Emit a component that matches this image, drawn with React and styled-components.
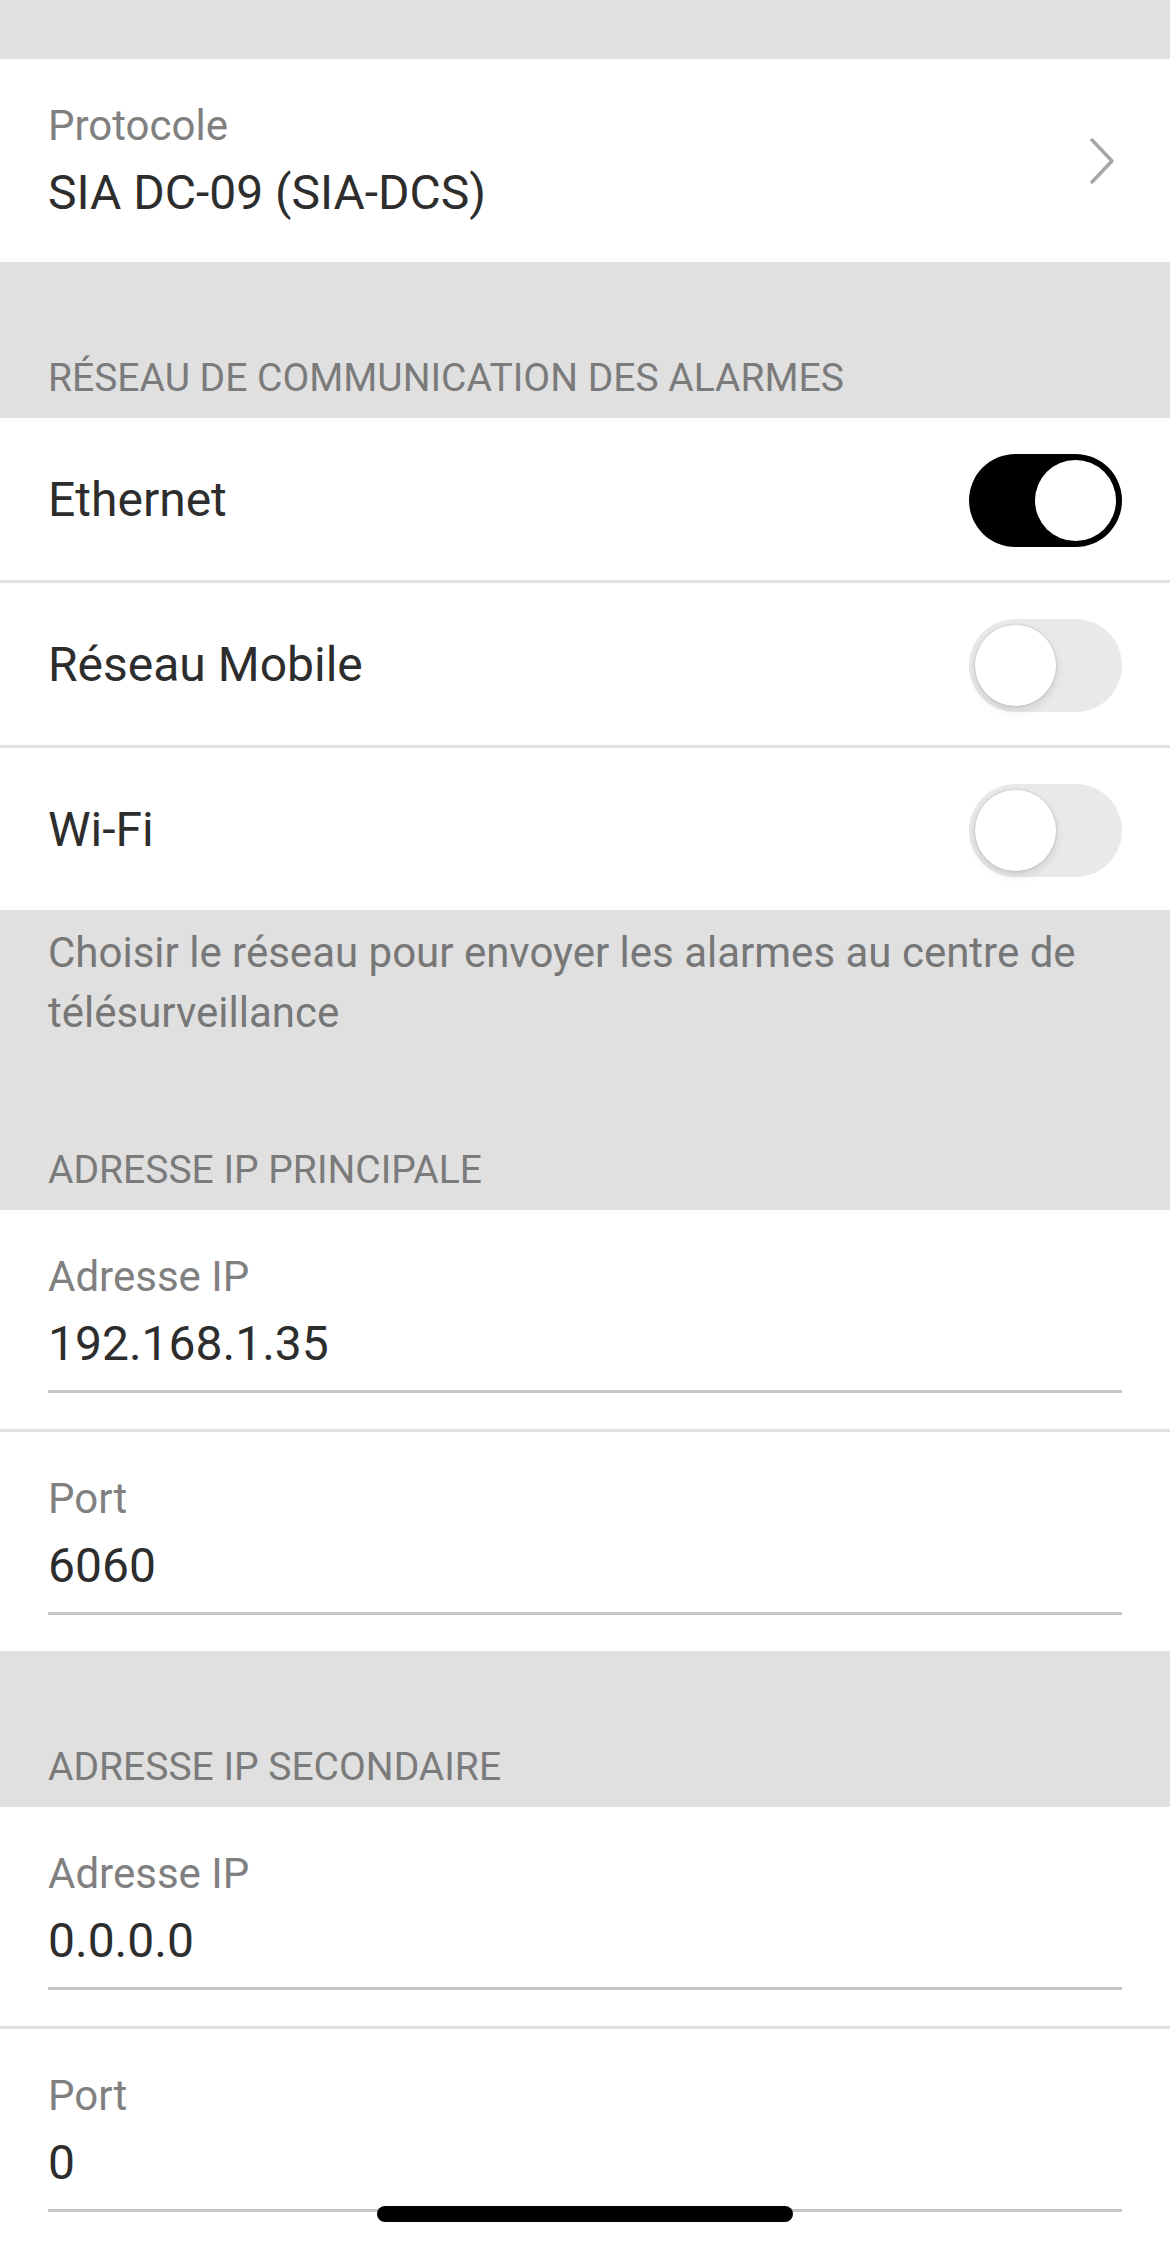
import React from "react";
import styled, { createGlobalStyle } from "styled-components";

const GlobalStyle = createGlobalStyle`
  html, body {
    margin: 0;
    padding: 0;
    background: #e0e0e0;
    overflow: hidden;
  }
  * { box-sizing: border-box; }
  body {
    font-family: Roboto, "Noto Sans", "Liberation Sans", sans-serif;
    -webkit-font-smoothing: antialiased;
  }
`;

const Screen = styled.div`
  position: relative;
  width: 1170px;
  height: 2246px;
  overflow: hidden;
  background: #e0e0e0;
  display: flex;
  flex-direction: column;
`;

const TopGap = styled.div`
  height: 59px;
  flex-shrink: 0;
`;

const Group = styled.div`
  background: #ffffff;
  display: flex;
  flex-direction: column;
  flex-shrink: 0;
`;

const SelectRow = styled.div`
  display: flex;
  align-items: center;
  justify-content: space-between;
  padding: 42px 54px 41px 48px;
`;

const FieldText = styled.div`
  display: flex;
  flex-direction: column;
  gap: 14px;
`;

const Label = styled.div`
  font-size: 42px;
  line-height: 50px;
  color: #808080;
`;

const Value = styled.div`
  font-size: 48px;
  line-height: 56px;
  color: #2d2d2d;
`;

const SectionHeader = styled.div`
  padding: 93px 48px 17px 48px;
  font-size: 39px;
  line-height: 46px;
  color: #7b7b7b;
  text-transform: uppercase;
  flex-shrink: 0;
`;

const SwitchRow = styled.div`
  height: 162px;
  display: flex;
  align-items: center;
  justify-content: space-between;
  padding: 2px 48px 0 48px;
  & + & {
    border-top: 3px solid #e0e0e0;
    height: 165px;
  }
`;

const SwitchLabel = styled.span`
  font-size: 48px;
  line-height: 56px;
  color: #2d2d2d;
`;

const Track = styled.button`
  position: relative;
  width: 153px;
  height: 93px;
  border: none;
  padding: 0;
  border-radius: 47px;
  background: ${(p) => (p.$on ? "#000000" : "#e9e9ea")};
  cursor: pointer;
  flex-shrink: 0;
`;

const Knob = styled.span`
  position: absolute;
  top: 6px;
  left: ${(p) => (p.$on ? "66px" : "6px")};
  width: 81px;
  height: 81px;
  border-radius: 50%;
  background: #ffffff;
  box-shadow: ${(p) =>
    p.$on
      ? "none"
      : "0 4px 10px rgba(0,0,0,0.12), 0 0 0 1.5px rgba(0,0,0,0.05)"};
`;

const Footer = styled.div`
  padding: 13px 48px 11px 48px;
  font-size: 42px;
  line-height: 60px;
  color: #777777;
  flex-shrink: 0;
`;

const InputRow = styled.div`
  display: flex;
  flex-direction: column;
  padding: 42px 48px 36px 48px;
  & + & {
    border-top: 3px solid #e0e0e0;
  }
`;

const InputLabel = styled(Label)`
  margin-bottom: 13px;
`;

const TextInput = styled.input`
  display: block;
  width: 100%;
  height: 78px;
  margin: 0;
  padding: 0 0 19px 0;
  border: none;
  border-bottom: 3px solid #c6c6c6;
  border-radius: 0;
  background: transparent;
  outline: none;
  font-family: inherit;
  font-size: 48px;
  line-height: 56px;
  color: #2d2d2d;
`;

const HomeIndicator = styled.div`
  position: absolute;
  left: 377px;
  bottom: 24px;
  width: 416px;
  height: 16px;
  border-radius: 8px;
  background: #000000;
`;

function Chevron() {
  return (
    <svg width="28" height="48" viewBox="0 0 28 48" aria-hidden="true">
      <path
        d="M4 3 L24 24 L4 45"
        fill="none"
        stroke="#a6a6a6"
        strokeWidth="3.5"
        strokeLinecap="round"
        strokeLinejoin="round"
      />
    </svg>
  );
}

function Switch({ on }) {
  return (
    <Track type="button" role="switch" aria-checked={on} $on={on}>
      <Knob $on={on} />
    </Track>
  );
}

function Field({ label, value }) {
  return (
    <InputRow>
      <InputLabel>{label}</InputLabel>
      <TextInput defaultValue={value} readOnly />
    </InputRow>
  );
}

const networks = [
  { name: "Ethernet", on: true },
  { name: "Réseau Mobile", on: false },
  { name: "Wi-Fi", on: false },
];

export default function App() {
  return (
    <>
      <GlobalStyle />
      <Screen>
        <TopGap />
        <Group>
          <SelectRow>
            <FieldText>
              <Label>Protocole</Label>
              <Value>SIA DC-09 (SIA-DCS)</Value>
            </FieldText>
            <Chevron />
          </SelectRow>
        </Group>

        <SectionHeader>Réseau de communication des alarmes</SectionHeader>
        <Group>
          {networks.map((n) => (
            <SwitchRow key={n.name}>
              <SwitchLabel>{n.name}</SwitchLabel>
              <Switch on={n.on} />
            </SwitchRow>
          ))}
        </Group>
        <Footer>
          Choisir le réseau pour envoyer les alarmes au centre de
          télésurveillance
        </Footer>

        <SectionHeader>Adresse IP principale</SectionHeader>
        <Group>
          <Field label="Adresse IP" value="192.168.1.35" />
          <Field label="Port" value="6060" />
        </Group>

        <SectionHeader>Adresse IP secondaire</SectionHeader>
        <Group>
          <Field label="Adresse IP" value="0.0.0.0" />
          <Field label="Port" value="0" />
        </Group>

        <HomeIndicator />
      </Screen>
    </>
  );
}
